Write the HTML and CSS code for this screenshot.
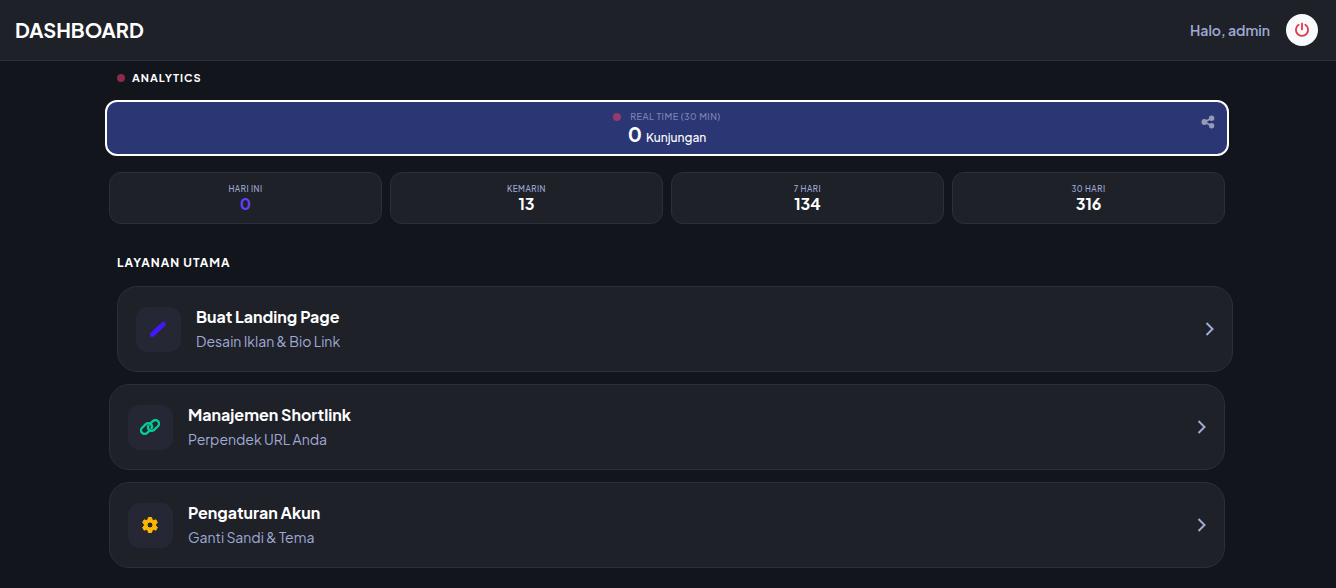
FILE: index.html
```html
<!DOCTYPE html>
<html lang="id">
<head>
<meta charset="utf-8">
<meta name="viewport" content="width=device-width, initial-scale=1">
<title>Dashboard</title>
<link rel="stylesheet" href="styles.css">
</head>
<body>
<header class="topbar">
  <h1 class="brand">DASHBOARD</h1>
  <div class="user">
    <span class="greeting">Halo, admin</span>
    <button class="logout" type="button" aria-label="Keluar">
      <svg width="16" height="16" viewBox="0 0 16 16" fill="none" stroke="currentColor" stroke-width="1.8" stroke-linecap="round"><path d="M8 1.4v6M4.6 2.8a6.1 6.1 0 1 0 6.8 0"/></svg>
    </button>
  </div>
</header>
<main class="page">
  <div class="container">
    <h2 class="section-title"><span class="dot"></span>ANALYTICS</h2>
    <section class="realtime">
      <div class="realtime-label"><span class="dot"></span>REAL TIME (30 MIN)</div>
      <div class="realtime-value"><strong class="realtime-number">0</strong> Kunjungan</div>
      <button class="share" type="button" aria-label="Bagikan">
        <svg width="14" height="14" viewBox="0 0 14 14" fill="currentColor"><path d="M10.5 3.2 3.6 7l6.9 3.8" fill="none" stroke="currentColor" stroke-width="1.8"/><circle cx="3.4" cy="7" r="2.9"/><circle cx="10.6" cy="3.2" r="2.7"/><circle cx="10.6" cy="10.8" r="2.7"/></svg>
      </button>
    </section>
    <section class="stats">
      <div class="stat"><span class="stat-label">HARI INI</span><strong class="stat-value stat-today">0</strong></div>
      <div class="stat"><span class="stat-label">KEMARIN</span><strong class="stat-value">13</strong></div>
      <div class="stat"><span class="stat-label">7 HARI</span><strong class="stat-value">134</strong></div>
      <div class="stat"><span class="stat-label">30 HARI</span><strong class="stat-value">316</strong></div>
    </section>
    <h2 class="section-title services-title">LAYANAN UTAMA</h2>
    <nav class="services">
      <a class="service is-active" href="#landing">
        <span class="service-icon icon-edit"><svg width="20" height="20" viewBox="0 0 20 20" fill="none"><path d="M4.3 15.6 15.3 5.2" stroke="currentColor" stroke-width="4.8" stroke-linecap="round"/><path d="M12.4 7.2l2.4-2.2" class="pen-notch"/></svg></span>
        <span class="service-text"><span class="service-name">Buat Landing Page</span><span class="service-desc">Desain Iklan &amp; Bio Link</span></span>
        <svg class="chevron" width="10" height="14" viewBox="0 0 10 14"><path d="M2.5 1 8.5 7l-6 6"/></svg>
      </a>
      <a class="service" href="#shortlink">
        <span class="service-icon icon-link"><svg width="20" height="16" viewBox="0 0 20 16" fill="none" stroke="currentColor" stroke-width="2.3" stroke-linecap="round"><path d="M9 12.1 7.2 13.9a3.6 3.6 0 0 1-5.1-5.1l3.7-3.7a3.6 3.6 0 0 1 5.1 0 3.6 3.6 0 0 1 .6 4.3"/><path d="m11 3.9 1.8-1.8a3.6 3.6 0 0 1 5.1 5.1l-3.7 3.7a3.6 3.6 0 0 1-5.1 0 3.6 3.6 0 0 1-.6-4.3"/></svg></span>
        <span class="service-text"><span class="service-name">Manajemen Shortlink</span><span class="service-desc">Perpendek URL Anda</span></span>
        <svg class="chevron" width="10" height="14" viewBox="0 0 10 14"><path d="M2.5 1 8.5 7l-6 6"/></svg>
      </a>
      <a class="service" href="#akun">
        <span class="service-icon icon-gear"><svg width="18" height="18" viewBox="0 0 18 18"><path fill="currentColor" fill-rule="evenodd" stroke="currentColor" stroke-width="1" stroke-linejoin="round" d="M7.4 1.5h3.2l.5 2.2 1.5.9 2.2-.8 1.6 2.8-1.7 1.5v1.8l1.7 1.5-1.6 2.8-2.2-.8-1.5.9-.5 2.2H7.4l-.5-2.2-1.5-.9-2.2.8-1.6-2.8 1.7-1.5V8.1L1.6 6.6l1.6-2.8 2.2.8 1.5-.9zM9 6a3 3 0 1 0 0 6 3 3 0 0 0 0-6z"/></svg></span>
        <span class="service-text"><span class="service-name">Pengaturan Akun</span><span class="service-desc">Ganti Sandi &amp; Tema</span></span>
        <svg class="chevron" width="10" height="14" viewBox="0 0 10 14"><path d="M2.5 1 8.5 7l-6 6"/></svg>
      </a>
    </nav>
  </div>
</main>
</body>
</html>
```

FILE: styles.css
```css
:root {
  --bg: #12151c;
  --card: #1f2129;
  --line: #2c2f3a;
  --tile: #252834;
  --muted: #a0aad6;
}
* { box-sizing: border-box; }
body {
  margin: 0;
  background: var(--bg);
  color: #fff;
  font-family: "Plus Jakarta Sans", Inter, "Liberation Sans", sans-serif;
}
h1, h2 { margin: 0; }
button {
  padding: 0;
  border: 0;
  font: inherit;
  cursor: pointer;
}
.topbar {
  display: flex;
  align-items: center;
  justify-content: space-between;
  padding: 14px 18px 14px 15px;
  background: var(--card);
  border-bottom: 1px solid var(--line);
}
.brand {
  font-size: 20px;
  line-height: 32px;
  font-weight: 700;
}
.user {
  display: flex;
  align-items: center;
  gap: 16px;
}
.greeting {
  font-size: 14px;
  line-height: 32px;
  font-weight: 600;
  color: var(--muted);
}
.logout {
  display: grid;
  place-items: center;
  width: 32px;
  height: 32px;
  border-radius: 50%;
  background: #f8fafc;
  color: #e0394a;
}
.page { padding-right: 2px; }
.container {
  max-width: 1140px;
  margin: 0 auto;
  padding: 8px 12px 20px;
}
.section-title {
  display: flex;
  align-items: center;
  gap: 7px;
  padding-left: 8px;
  font-size: 11px;
  line-height: 18px;
  font-weight: 700;
  letter-spacing: 1px;
}
.dot {
  width: 8px;
  height: 8px;
  border-radius: 50%;
  background: #882c49;
}
.realtime {
  position: relative;
  margin: 13px -4px 16px;
  padding: 7px 0 10px;
  border: 2px solid #fff;
  border-radius: 12px;
  background: #2b3674;
  text-align: center;
}
.realtime-label {
  display: flex;
  align-items: center;
  justify-content: center;
  gap: 9px;
  font-size: 9px;
  line-height: 15px;
  font-weight: 500;
  letter-spacing: 0.5px;
  color: #7e86b3;
}
.realtime .dot { background: #953a6d; }
.realtime-value {
  display: flex;
  align-items: baseline;
  justify-content: center;
  gap: 4px;
  font-size: 12px;
  line-height: 12px;
  font-weight: 500;
}
.realtime-number {
  font-size: 20px;
  line-height: 20px;
  font-weight: 700;
}
.share {
  position: absolute;
  top: 13px;
  right: 12px;
  display: grid;
  background: none;
  color: #959ab9;
}
.stats {
  display: grid;
  grid-template-columns: repeat(4, 1fr);
  gap: 8px;
}
.stat {
  display: flex;
  flex-direction: column;
  align-items: center;
  padding: 9px 8px 11px;
  border: 1px solid var(--line);
  border-radius: 12px;
  background: var(--card);
}
.stat-label {
  font-size: 8px;
  line-height: 14px;
  font-weight: 500;
  letter-spacing: 0.5px;
  color: var(--muted);
}
.stat-value {
  font-size: 16px;
  line-height: 16px;
  font-weight: 700;
}
.stat-today { color: #673dff; }
.services-title {
  padding-top: 30px;
  font-size: 12px;
}
.services {
  display: flex;
  flex-direction: column;
  gap: 12px;
  margin-top: 14px;
}
.service {
  display: flex;
  align-items: center;
  gap: 15px;
  padding: 18px;
  border: 1px solid var(--line);
  border-radius: 20px;
  background: var(--card);
  color: inherit;
  text-decoration: none;
}
.service.is-active { transform: translateX(8px); }
.service-icon {
  display: grid;
  place-items: center;
  width: 45px;
  height: 45px;
  padding-right: 2px;
  border-radius: 12px;
  background: var(--tile);
}
.icon-edit { color: #4318ff; }
.icon-link { color: #05cd99; }
.icon-gear { color: #ffb800; }
.pen-notch {
  stroke: var(--tile);
  stroke-width: 1;
  opacity: 0.5;
}
.service-text {
  display: flex;
  flex: 1;
  flex-direction: column;
}
.service-name {
  font-size: 16px;
  line-height: 24px;
  font-weight: 700;
}
.service-desc {
  font-size: 14px;
  line-height: 24px;
  color: var(--muted);
}
.chevron {
  fill: none;
  stroke: var(--muted);
  stroke-width: 2;
}
```
